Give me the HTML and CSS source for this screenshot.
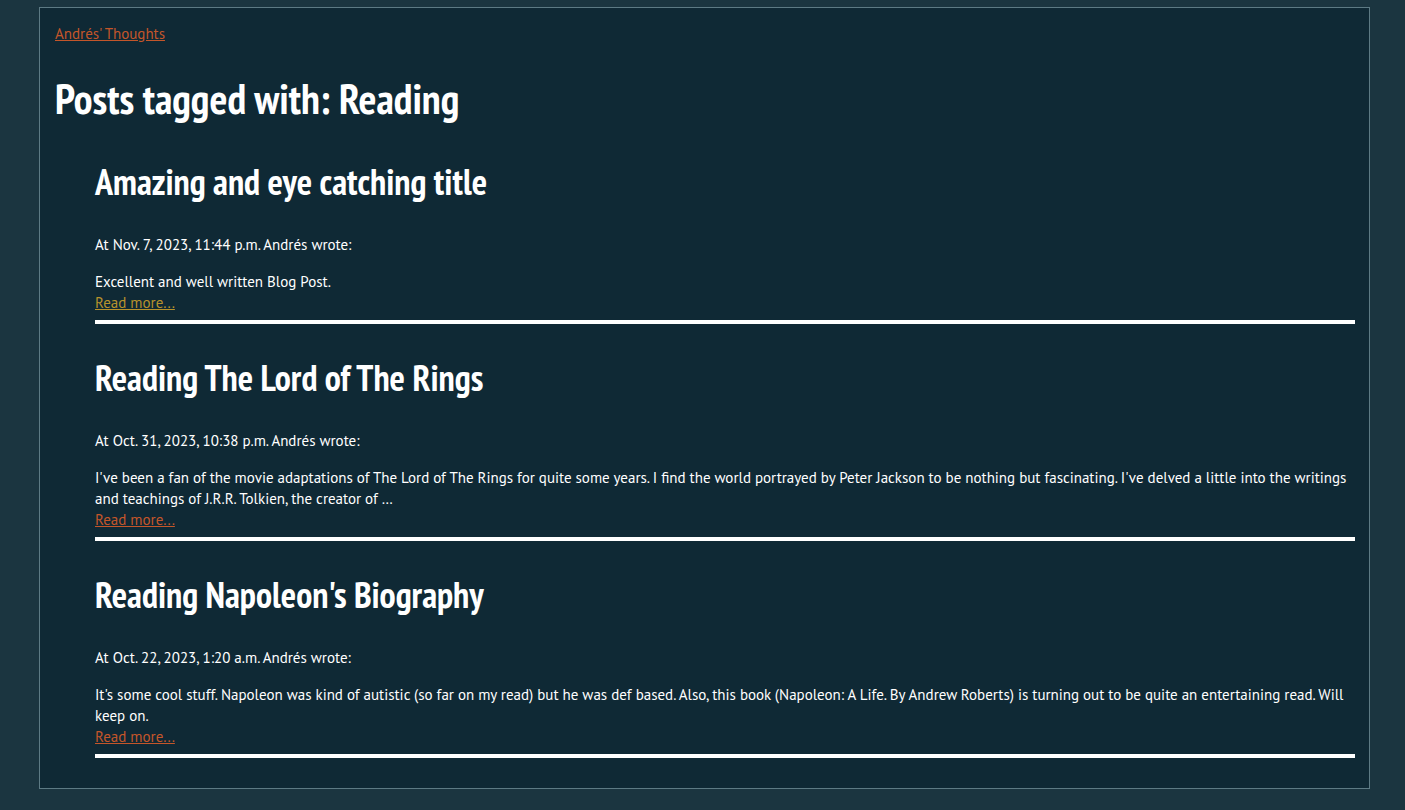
FILE: index.html
```html
<!DOCTYPE html>
<html lang="en">
<head>
<meta charset="utf-8">
<title>Posts tagged with: Reading</title>
<link rel="stylesheet" href="styles.css">
</head>
<body>
<main class="page">
  <a class="site-link" href="#">Andrés' Thoughts</a>
  <h1 class="page-title">Posts tagged with: Reading</h1>
  <ul class="posts">
    <li class="post">
      <h2 class="post-title">Amazing and eye catching title</h2>
      <p class="post-meta">At Nov. 7, 2023, 11:44 p.m. Andrés wrote:</p>
      <p class="post-body">Excellent and well written Blog Post.</p>
      <a class="read-more visited" href="#">Read more...</a>
    </li>
    <li class="post">
      <h2 class="post-title">Reading The Lord of The Rings</h2>
      <p class="post-meta">At Oct. 31, 2023, 10:38 p.m. Andrés wrote:</p>
      <p class="post-body">I've been a fan of the movie adaptations of The Lord of The Rings for quite some years. I find the world portrayed by Peter Jackson to be nothing but fascinating. I've delved a little into the writings and teachings of J.R.R. Tolkien, the creator of …</p>
      <a class="read-more" href="#">Read more...</a>
    </li>
    <li class="post">
      <h2 class="post-title">Reading Napoleon's Biography</h2>
      <p class="post-meta">At Oct. 22, 2023, 1:20 a.m. Andrés wrote:</p>
      <p class="post-body">It's some cool stuff. Napoleon was kind of autistic (so far on my read) but he was def based. Also, this book (Napoleon: A Life. By Andrew Roberts) is turning out to be quite an entertaining read. Will keep on.</p>
      <a class="read-more" href="#">Read more...</a>
    </li>
  </ul>
</main>
</body>
</html>
```

FILE: styles.css
```css
html, body {
  margin: 0;
  padding: 0;
}
body {
  background: #1b3540;
  color: #ffffff;
  font-family: "PT Sans", "Lato", "Noto Sans", sans-serif;
  font-size: 15px;
  line-height: 21px;
  padding: 7px 35px 20px 39px;
}
.page {
  background: #0f2935;
  border: 1px solid #5d7a84;
  padding: 15px 14px 30px 15px;
}
.site-link {
  display: block;
  width: max-content;
  color: #c4562a;
}
.page-title {
  font-family: "PT Sans Narrow", "Liberation Sans Narrow", sans-serif;
  font-weight: bold;
  font-size: 42px;
  line-height: 48px;
  margin: 31px 0 38px;
}
.posts {
  list-style: none;
  margin: 0;
  padding: 0 0 0 40px;
}
.post {
  border-bottom: 4px solid #ffffff;
  padding-bottom: 7px;
  margin-bottom: 33px;
}
.post:last-child {
  margin-bottom: 0;
}
.post-title {
  font-family: "PT Sans Narrow", "Liberation Sans Narrow", sans-serif;
  font-weight: bold;
  font-size: 36px;
  line-height: 42px;
  margin: 0 0 31px;
}
.post-meta {
  margin: 0 0 16px;
}
.post-body {
  margin: 0;
}
.read-more {
  color: #c4562a;
}
.read-more.visited {
  color: #b8922c;
}
```
